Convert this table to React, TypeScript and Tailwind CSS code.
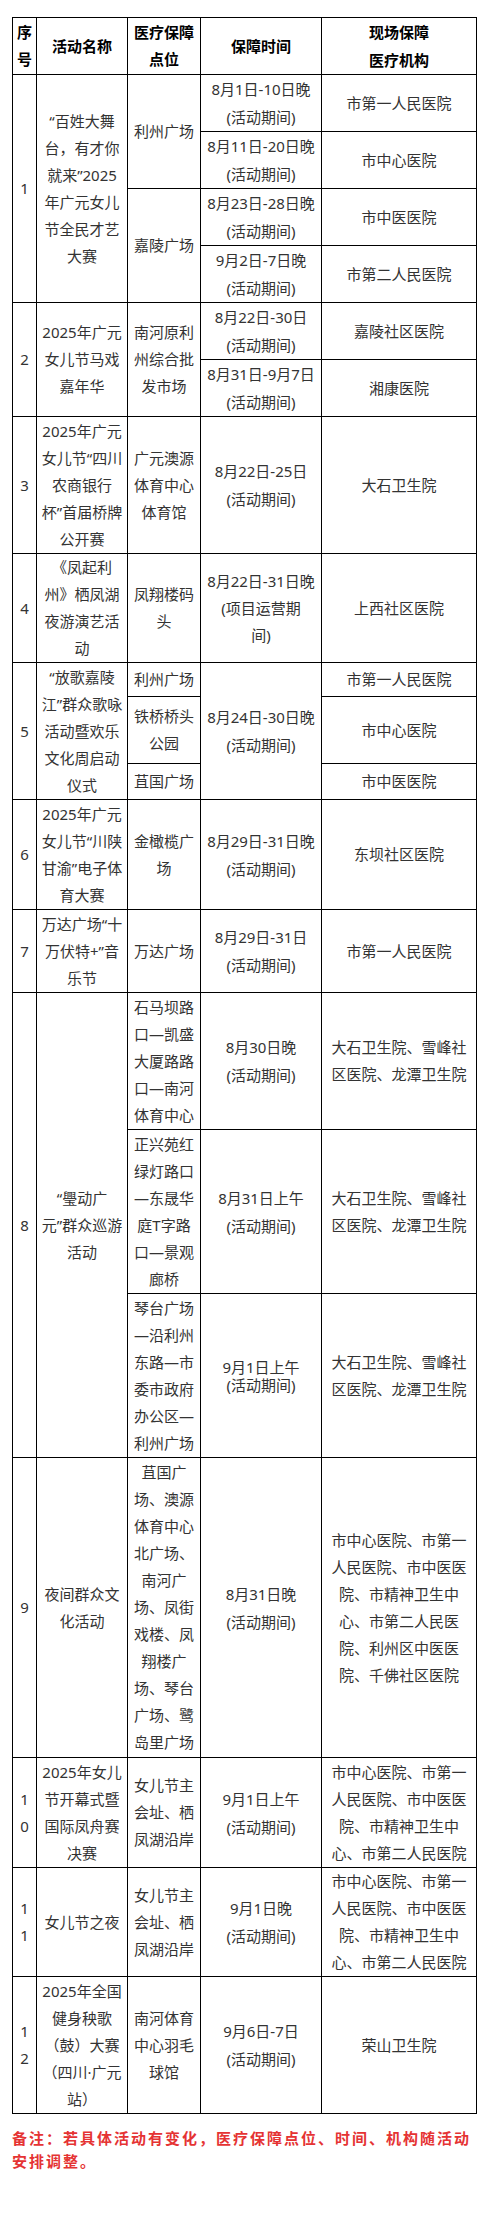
import React from 'react'

type CellProps = {
  lines: string[]
  rowSpan?: number
  className?: string
}

// one table cell, every line break written out so wrapping matches the picture
function Cell({ lines, rowSpan, className = '' }: CellProps) {
  return (
    <td
      rowSpan={rowSpan}
      className={`border border-black text-center align-middle whitespace-nowrap px-[4px] py-0 ${className || 'leading-[27px]'}`}
    >
      {lines.map((l, i) => (
        <React.Fragment key={i}>
          {i > 0 && <br />}
          {l}
        </React.Fragment>
      ))}
    </td>
  )
}

const T = 'leading-[28px]'

export default function App() {
  return (
    <div
      className="w-[481px] min-h-[2223px] bg-white pt-[17px] pl-[12px] text-[15px] text-[#333333]"
      style={{ fontFamily: '"Noto Sans", "Noto Sans CJK SC", sans-serif' }}
    >
      <table className="w-[464px] table-fixed border-collapse border border-black">
        <colgroup>
          <col className="w-[24px]" />
          <col className="w-[91px]" />
          <col className="w-[73px]" />
          <col className="w-[121px]" />
          <col className="w-[155px]" />
        </colgroup>
        <tbody>
          {/* Header */}
          <tr className="h-[55px] font-bold text-black">
            <Cell lines={['序', '号']} />
            <Cell lines={['活动名称']} />
            <Cell lines={['医疗保障', '点位']} />
            <Cell lines={['保障时间']} />
            <Cell lines={['现场保障', '医疗机构']} className="leading-[28px]" />
          </tr>

          {/* 1 */}
          <tr className="h-[56px]">
            <Cell rowSpan={4} lines={['1']} />
            <Cell rowSpan={4} lines={['“百姓大舞', '台，有才你', '就来”2025', '年广元女儿', '节全民才艺', '大赛']} />
            <Cell rowSpan={2} lines={['利州广场']} />
            <Cell lines={['8月1日-10日晚', '(活动期间)']} className={T} />
            <Cell lines={['市第一人民医院']} />
          </tr>
          <tr className="h-[55px]">
            <Cell lines={['8月11日-20日晚', '(活动期间)']} className={T} />
            <Cell lines={['市中心医院']} />
          </tr>
          <tr className="h-[56px]">
            <Cell rowSpan={2} lines={['嘉陵广场']} />
            <Cell lines={['8月23日-28日晚', '(活动期间)']} className={T} />
            <Cell lines={['市中医医院']} />
          </tr>
          <tr className="h-[55px]">
            <Cell lines={['9月2日-7日晚', '(活动期间)']} className={T} />
            <Cell lines={['市第二人民医院']} />
          </tr>

          {/* 2 */}
          <tr className="h-[55px]">
            <Cell rowSpan={2} lines={['2']} />
            <Cell rowSpan={2} lines={['2025年广元', '女儿节马戏', '嘉年华']} />
            <Cell rowSpan={2} lines={['南河原利', '州综合批', '发市场']} />
            <Cell lines={['8月22日-30日', '(活动期间)']} className={T} />
            <Cell lines={['嘉陵社区医院']} />
          </tr>
          <tr className="h-[56px]">
            <Cell lines={['8月31日-9月7日', '(活动期间)']} className={T} />
            <Cell lines={['湘康医院']} />
          </tr>

          {/* 3 */}
          <tr className="h-[137px]">
            <Cell lines={['3']} />
            <Cell lines={['2025年广元', '女儿节“四川', '农商银行', '杯”首届桥牌', '公开赛']} />
            <Cell lines={['广元澳源', '体育中心', '体育馆']} />
            <Cell lines={['8月22日-25日', '(活动期间)']} className={T} />
            <Cell lines={['大石卫生院']} />
          </tr>

          {/* 4 */}
          <tr className="h-[109px]">
            <Cell lines={['4']} />
            <Cell lines={['《凤起利', '州》栖凤湖', '夜游演艺活', '动']} />
            <Cell lines={['凤翔楼码', '头']} />
            <Cell lines={['8月22日-31日晚', '(项目运营期', '间)']} />
            <Cell lines={['上西社区医院']} />
          </tr>

          {/* 5 */}
          <tr className="h-[34px]">
            <Cell rowSpan={3} lines={['5']} />
            <Cell rowSpan={3} lines={['“放歌嘉陵', '江”群众歌咏', '活动暨欢乐', '文化周启动', '仪式']} />
            <Cell lines={['利州广场']} />
            <Cell rowSpan={3} lines={['8月24日-30日晚', '(活动期间)']} className={T} />
            <Cell lines={['市第一人民医院']} />
          </tr>
          <tr className="h-[67px]">
            <Cell lines={['铁桥桥头', '公园']} />
            <Cell lines={['市中心医院']} />
          </tr>
          <tr className="h-[36px]">
            <Cell lines={['苴国广场']} />
            <Cell lines={['市中医医院']} />
          </tr>

          {/* 6 */}
          <tr className="h-[110px]">
            <Cell lines={['6']} />
            <Cell lines={['2025年广元', '女儿节“川陕', '甘渝”电子体', '育大赛']} />
            <Cell lines={['金橄榄广', '场']} />
            <Cell lines={['8月29日-31日晚', '(活动期间)']} className={T} />
            <Cell lines={['东坝社区医院']} />
          </tr>

          {/* 7 */}
          <tr className="h-[83px]">
            <Cell lines={['7']} />
            <Cell lines={['万达广场“十', '万伏特+”音', '乐节']} />
            <Cell lines={['万达广场']} />
            <Cell lines={['8月29日-31日', '(活动期间)']} className={T} />
            <Cell lines={['市第一人民医院']} />
          </tr>

          {/* 8 */}
          <tr className="h-[137px]">
            <Cell rowSpan={3} lines={['8']} />
            <Cell rowSpan={3} lines={['“璺动广', '元”群众巡游', '活动']} />
            <Cell lines={['石马坝路', '口—凯盛', '大厦路路', '口—南河', '体育中心']} />
            <Cell lines={['8月30日晚', '(活动期间)']} className={T} />
            <Cell lines={['大石卫生院、雪峰社', '区医院、龙潭卫生院']} />
          </tr>
          <tr className="h-[164px]">
            <Cell lines={['正兴苑红', '绿灯路口', '—东晟华', '庭T字路', '口—景观', '廊桥']} />
            <Cell lines={['8月31日上午', '(活动期间)']} className={T} />
            <Cell lines={['大石卫生院、雪峰社', '区医院、龙潭卫生院']} />
          </tr>
          <tr className="h-[164px]">
            <Cell lines={['琴台广场', '—沿利州', '东路—市', '委市政府', '办公区—', '利州广场']} />
            <Cell lines={['9月1日上午', '(活动期间)']} className="leading-[18px]" />
            <Cell lines={['大石卫生院、雪峰社', '区医院、龙潭卫生院']} />
          </tr>

          {/* 9 */}
          <tr className="h-[300px]">
            <Cell lines={['9']} />
            <Cell lines={['夜间群众文', '化活动']} />
            <Cell
              lines={['苴国广', '场、澳源', '体育中心', '北广场、', '南河广', '场、凤街', '戏楼、凤', '翔楼广', '场、琴台', '广场、鹭', '岛里广场']}
            />
            <Cell lines={['8月31日晚', '(活动期间)']} className={T} />
            <Cell
              lines={['市中心医院、市第一', '人民医院、市中医医', '院、市精神卫生中', '心、市第二人民医', '院、利州区中医医', '院、千佛社区医院']}
            />
          </tr>

          {/* 10 */}
          <tr className="h-[110px]">
            <Cell lines={['1', '0']} />
            <Cell lines={['2025年女儿', '节开幕式暨', '国际凤舟赛', '决赛']} />
            <Cell lines={['女儿节主', '会址、栖', '凤湖沿岸']} />
            <Cell lines={['9月1日上午', '(活动期间)']} className={T} />
            <Cell lines={['市中心医院、市第一', '人民医院、市中医医', '院、市精神卫生中', '心、市第二人民医院']} />
          </tr>

          {/* 11 */}
          <tr className="h-[109px]">
            <Cell lines={['1', '1']} />
            <Cell lines={['女儿节之夜']} />
            <Cell lines={['女儿节主', '会址、栖', '凤湖沿岸']} />
            <Cell lines={['9月1日晚', '(活动期间)']} className={T} />
            <Cell lines={['市中心医院、市第一', '人民医院、市中医医', '院、市精神卫生中', '心、市第二人民医院']} />
          </tr>

          {/* 12 */}
          <tr className="h-[137px]">
            <Cell lines={['1', '2']} />
            <Cell lines={['2025年全国', '健身秧歌', '（鼓）大赛', '（四川·广元', '站）']} />
            <Cell lines={['南河体育', '中心羽毛', '球馆']} />
            <Cell lines={['9月6日-7日', '(活动期间)']} className={T} />
            <Cell lines={['荣山卫生院']} />
          </tr>
        </tbody>
      </table>

      <p className="mt-[13px] w-[464px] text-[15px] leading-[23px] tracking-[2px] font-bold text-[#e53333]">
        备注：若具体活动有变化，医疗保障点位、时间、机构随活动
        <br />
        安排调整。
      </p>
    </div>
  )
}
